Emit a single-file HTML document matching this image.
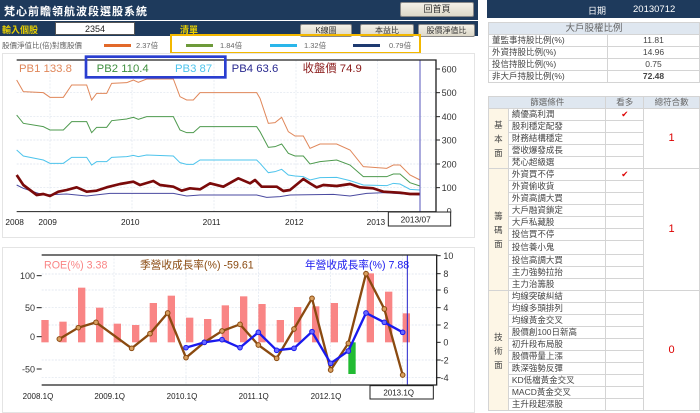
<!DOCTYPE html>
<html><head><meta charset="utf-8"><style>
*{margin:0;padding:0;box-sizing:border-box}
body{width:700px;height:413px;background:#fff;position:relative;overflow:hidden;font-family:"Liberation Sans","Noto Sans CJK TC",sans-serif;font-size:9px;color:#333}
.a{position:absolute}
.btn{position:absolute;background:linear-gradient(#f4f1e8,#ddd8c8);border:1px solid #888;border-radius:2px;text-align:center;font-size:8px;color:#333;line-height:12px}
table{border-collapse:collapse;position:absolute;font-size:8.5px;color:#444}
td{border:1px solid #d4d4d4;height:12px;line-height:11px;padding:0 3px;white-space:nowrap}
</style></head><body>
<!-- header -->
<div class="a" style="left:0;top:0;width:478px;height:20px;background:#1e3a5c"></div>
<div class="a" style="left:4px;top:3px;color:#fff;font-size:11px;font-weight:bold;letter-spacing:1px">梵心前瞻領航波段選股系統</div>
<div class="btn" style="left:400px;top:2px;width:74px;height:15px;line-height:13px;font-size:9px">回首頁</div>
<div class="a" style="left:0;top:21px;width:478px;height:15px;background:#1e3a5c"></div>
<div class="a" style="left:2px;top:23px;color:#e8d000;font-size:9px;font-weight:bold">輸入個股</div>
<div class="a" style="left:55px;top:22px;width:80px;height:13px;background:#fff;border:1px solid #555;text-align:center;font-size:9px;color:#222;line-height:12px">2354</div>
<div class="a" style="left:180px;top:23px;color:#e8d000;font-size:9px;font-weight:bold">清單</div>
<div class="btn" style="left:300px;top:24px;width:52px;height:13px">K線圖</div>
<div class="btn" style="left:360px;top:24px;width:54px;height:13px">本益比</div>
<div class="btn" style="left:418px;top:24px;width:57px;height:13px">股價淨值比</div>
<div class="a" style="left:0;top:37px;width:478px;height:15px;background:#fff"></div>
<div class="a" style="left:2px;top:40px;font-size:7.5px;color:#666">股價淨值比(倍)對應股價</div>
<div class="a" style="left:104px;top:44px;width:27px;height:3px;background:#e2692a"></div>
<div class="a" style="left:136px;top:40px;font-size:7.5px;color:#666">2.37倍</div>
<div class="a" style="left:186px;top:44px;width:27px;height:3px;background:#6d9a3a"></div>
<div class="a" style="left:220px;top:40px;font-size:7.5px;color:#666">1.84倍</div>
<div class="a" style="left:270px;top:44px;width:27px;height:3px;background:#2ab6ea"></div>
<div class="a" style="left:304px;top:40px;font-size:7.5px;color:#666">1.32倍</div>
<div class="a" style="left:353px;top:44px;width:27px;height:3px;background:#1e3a70"></div>
<div class="a" style="left:389px;top:40px;font-size:7.5px;color:#666">0.79倍</div>
<div class="a" style="left:170px;top:34px;width:251px;height:20px;border:2px solid #f3b800"></div>
<!-- panels -->
<div class="a" style="left:2px;top:53px;width:473px;height:185px;border:1px solid #e4e4e4"></div>
<div class="a" style="left:2px;top:247px;width:473px;height:166px;border:1px solid #e4e4e4"></div>
<!-- top chart -->
<svg class="a" style="left:0;top:50px" width="480" height="190" viewBox="0 0 1440 570" font-family="Liberation Sans,Noto Sans CJK TC,sans-serif">
<g stroke="#dde4ee" stroke-width="2" stroke-dasharray="6,4">
<line x1="50" y1="128" x2="1305" y2="128"/><line x1="50" y1="200" x2="1305" y2="200"/><line x1="50" y1="270" x2="1305" y2="270"/><line x1="50" y1="342" x2="1305" y2="342"/><line x1="50" y1="413" x2="1305" y2="413"/>
<line x1="150" y1="30" x2="150" y2="485"/><line x1="396" y1="30" x2="396" y2="485"/><line x1="642" y1="30" x2="642" y2="485"/><line x1="888" y1="30" x2="888" y2="485"/><line x1="1132" y1="30" x2="1132" y2="485"/>
</g>
<polyline fill="none" stroke="#e0875a" stroke-width="3" points="50,90 70,125 130,128 150,142 190,142 215,105 260,105 275,150 290,130 320,130 335,100 380,98 400,90 415,97 440,87 520,87 540,140 560,150 580,150 600,128 770,128 780,145 805,220 825,218 845,202 865,245 885,258 910,258 930,295 960,282 1010,282 1050,300 1090,350 1160,355 1180,345 1200,345 1230,375 1260,390"/>
<polyline fill="none" stroke="#4e9a4e" stroke-width="3" points="50,195 70,220 130,230 150,240 190,240 215,215 260,215 275,248 290,232 320,232 335,212 380,207 400,202 415,208 440,200 520,200 540,240 560,248 580,248 600,230 770,230 780,245 805,292 825,290 845,282 865,310 885,318 910,318 930,342 960,335 1010,330 1050,345 1090,380 1160,380 1180,372 1200,372 1230,398 1260,408"/>
<polyline fill="none" stroke="#4ec4ec" stroke-width="3" points="50,300 70,318 130,330 150,340 190,340 215,322 260,322 275,345 290,335 320,335 335,322 380,320 400,316 415,320 440,315 520,318 540,338 560,343 580,343 600,330 770,330 780,340 805,368 825,365 845,358 865,375 885,378 910,380 930,390 960,383 1010,382 1050,392 1090,405 1160,407 1180,400 1200,402 1230,418 1260,420"/>
<polyline fill="none" stroke="#4a4aa0" stroke-width="3" points="50,405 70,415 130,435 200,432 260,438 330,430 520,430 560,438 600,435 770,435 800,442 840,440 870,435 1000,433 1050,438 1100,430 1150,428 1260,435"/>
<polyline fill="none" stroke="#7a0a0a" stroke-width="8" stroke-linejoin="round" points="50,375 70,405 110,435 130,432 150,438 175,425 200,420 230,412 260,425 290,422 320,412 360,402 400,395 420,405 460,393 480,405 520,410 545,422 570,415 600,418 630,400 670,410 715,385 750,400 765,390 785,410 830,410 850,423 870,420 910,387 930,400 950,412 970,405 1010,408 1050,402 1080,412 1120,415 1150,425 1200,428 1230,432 1260,432"/>
<line x1="1260" y1="30" x2="1260" y2="485" stroke="#5555bb" stroke-width="3"/>
<polyline fill="none" stroke="#222" stroke-width="4" points="50,30 1308,30 1308,485"/>
<line x1="50" y1="485" x2="1308" y2="485" stroke="#222" stroke-width="3"/>
<g stroke="#222" stroke-width="3"><line x1="1308" y1="57" x2="1320" y2="57"/><line x1="1308" y1="128" x2="1320" y2="128"/><line x1="1308" y1="200" x2="1320" y2="200"/><line x1="1308" y1="270" x2="1320" y2="270"/><line x1="1308" y1="342" x2="1320" y2="342"/><line x1="1308" y1="413" x2="1320" y2="413"/></g>
<g font-size="27" fill="#333"><text x="1325" y="67">600</text><text x="1325" y="138">500</text><text x="1325" y="210">400</text><text x="1325" y="280">300</text><text x="1325" y="352">200</text><text x="1325" y="423">100</text><text x="1340" y="494">0</text></g>
<g font-size="25" fill="#222"><text x="16" y="525">2008</text><text x="115" y="525">2009</text><text x="363" y="525">2010</text><text x="608" y="525">2011</text><text x="855" y="525">2012</text><text x="1100" y="525">2013</text></g>
<rect x="1165" y="486" width="187" height="42" fill="#fff" stroke="#222" stroke-width="3"/>
<text x="1202" y="517" font-size="25" fill="#222">2013/07</text>
<g font-size="34"><text x="57" y="66" fill="#e0875a">PB1 133.8</text><text x="290" y="66" fill="#3f8f3f">PB2 110.4</text><text x="525" y="66" fill="#4ec4ec">PB3 87</text><text x="695" y="66" fill="#2a2a90">PB4 63.6</text><text x="908" y="66" fill="#8a1a1a">收盤價 74.9</text></g>
<rect x="258" y="20" width="418" height="62" fill="none" stroke="#2a3ed0" stroke-width="8"/>
</svg>
<!-- bottom chart -->
<svg class="a" style="left:0;top:235px" width="480" height="178" viewBox="0 0 1440 534" font-family="Liberation Sans,Noto Sans CJK TC,sans-serif">
<g stroke="#dde4ee" stroke-width="2" stroke-dasharray="6,4">
<line x1="125" y1="117" x2="1310" y2="117"/><line x1="125" y1="165" x2="1310" y2="165"/><line x1="125" y1="218" x2="1310" y2="218"/><line x1="125" y1="270" x2="1310" y2="270"/><line x1="125" y1="375" x2="1310" y2="375"/><line x1="125" y1="428" x2="1310" y2="428"/>
<line x1="342" y1="60" x2="342" y2="450"/><line x1="558" y1="60" x2="558" y2="450"/><line x1="775" y1="60" x2="775" y2="450"/><line x1="992" y1="60" x2="992" y2="450"/><line x1="1208" y1="60" x2="1208" y2="450"/>
</g>
<g fill="#f98585">
<rect x="124" y="255" width="22" height="67"/><rect x="178" y="260" width="22" height="62"/><rect x="234" y="158" width="22" height="164"/><rect x="288" y="218" width="22" height="104"/><rect x="341" y="266" width="22" height="56"/><rect x="396" y="270" width="22" height="52"/><rect x="449" y="204" width="22" height="118"/><rect x="503" y="182" width="22" height="140"/><rect x="558" y="248" width="22" height="74"/><rect x="612" y="252" width="22" height="70"/><rect x="665" y="211" width="22" height="111"/><rect x="720" y="184" width="22" height="138"/><rect x="775" y="207" width="22" height="115"/><rect x="830" y="255" width="22" height="67"/><rect x="882" y="216" width="22" height="106"/><rect x="936" y="214" width="22" height="108"/><rect x="992" y="204" width="22" height="118"/><rect x="1100" y="115" width="22" height="207"/><rect x="1155" y="170" width="22" height="152"/><rect x="1208" y="235" width="22" height="87"/>
</g>
<rect x="1045" y="322" width="22" height="95" fill="#22bb33"/>
<polyline fill="none" stroke="#8a4a10" stroke-width="7" points="178,312 235,278 288,262 395,340 450,296 503,234 558,368 613,322 666,288 720,268 775,330 830,370 882,282 936,190 992,405 1045,325 1098,116 1153,222 1208,420"/>
<g fill="#d8a060" stroke="#8a4a10" stroke-width="3"><circle cx="178" cy="312" r="7"/><circle cx="235" cy="278" r="7"/><circle cx="288" cy="262" r="7"/><circle cx="395" cy="340" r="7"/><circle cx="450" cy="296" r="7"/><circle cx="503" cy="234" r="7"/><circle cx="558" cy="368" r="7"/><circle cx="613" cy="322" r="7"/><circle cx="666" cy="288" r="7"/><circle cx="720" cy="268" r="7"/><circle cx="775" cy="330" r="7"/><circle cx="830" cy="370" r="7"/><circle cx="882" cy="282" r="7"/><circle cx="936" cy="190" r="7"/><circle cx="992" cy="405" r="7"/><circle cx="1045" cy="325" r="7"/><circle cx="1098" cy="116" r="7"/><circle cx="1153" cy="222" r="7"/><circle cx="1208" cy="420" r="7"/></g>
<polyline fill="none" stroke="#1a1aee" stroke-width="7" points="558,338 613,322 666,314 720,338 775,292 830,346 882,340 936,290 992,385 1045,348 1098,234 1153,262 1208,292"/>
<g fill="#6a6aff" stroke="#1a1aee" stroke-width="3"><circle cx="558" cy="338" r="7"/><circle cx="613" cy="322" r="7"/><circle cx="666" cy="314" r="7"/><circle cx="720" cy="338" r="7"/><circle cx="775" cy="292" r="7"/><circle cx="830" cy="346" r="7"/><circle cx="882" cy="340" r="7"/><circle cx="936" cy="290" r="7"/><circle cx="992" cy="385" r="7"/><circle cx="1045" cy="348" r="7"/><circle cx="1098" cy="234" r="7"/><circle cx="1153" cy="262" r="7"/><circle cx="1208" cy="292" r="7"/></g>
<line x1="1222" y1="60" x2="1222" y2="450" stroke="#2222cc" stroke-width="3"/>
<polyline fill="none" stroke="#222" stroke-width="4" points="125,60 1310,60 1310,450 125,450"/>
<g stroke="#222" stroke-width="3"><line x1="110" y1="122" x2="125" y2="122"/><line x1="110" y1="218" x2="125" y2="218"/><line x1="110" y1="305" x2="125" y2="305"/><line x1="110" y1="402" x2="125" y2="402"/>
<line x1="1310" y1="62" x2="1322" y2="62"/><line x1="1310" y1="116" x2="1322" y2="116"/><line x1="1310" y1="165" x2="1322" y2="165"/><line x1="1310" y1="218" x2="1322" y2="218"/><line x1="1310" y1="270" x2="1322" y2="270"/><line x1="1310" y1="322" x2="1322" y2="322"/><line x1="1310" y1="375" x2="1322" y2="375"/><line x1="1310" y1="428" x2="1322" y2="428"/></g>
<g font-size="27" fill="#333" text-anchor="end"><text x="105" y="132">100</text><text x="105" y="228">50</text><text x="105" y="315">0</text><text x="105" y="412">-50</text></g>
<g font-size="27" fill="#333"><text x="1330" y="72">10</text><text x="1330" y="126">8</text><text x="1330" y="175">6</text><text x="1330" y="228">4</text><text x="1330" y="280">2</text><text x="1330" y="332">0</text><text x="1322" y="385">-2</text><text x="1322" y="438">-4</text></g>
<g font-size="24" fill="#222"><text x="68" y="492">2008.1Q</text><text x="283" y="492">2009.1Q</text><text x="500" y="492">2010.1Q</text><text x="716" y="492">2011.1Q</text><text x="932" y="492">2012.1Q</text></g>
<rect x="1110" y="452" width="190" height="40" fill="#fff" stroke="#222" stroke-width="3"/>
<text x="1150" y="482" font-size="24" fill="#222">2013.1Q</text>
<g font-size="32"><text x="132" y="100" fill="#f98585">ROE(%) 3.38</text><text x="420" y="100" fill="#8a4a10">季營收成長率(%) -59.61</text><text x="915" y="100" fill="#1a1aee">年營收成長率(%) 7.88</text></g>
</svg>
<!-- right panel -->
<div class="a" style="left:487px;top:0;width:213px;height:18px;background:#1e3a5c"></div>
<div class="a" style="left:588px;top:4px;color:#fff;font-size:9px">日期</div>
<div class="a" style="left:633px;top:4px;color:#fff;font-size:9.5px">20130712</div>
<table style="left:488px;top:22px;width:212px">
<tr><td colspan="2" style="text-align:center;background:#dfe7f0;color:#666;font-size:9.5px">大戶股權比例</td></tr>
<tr><td style="width:119px">董監事持股比例(%)</td><td style="text-align:center">11.81</td></tr>
<tr><td>外資持股比例(%)</td><td style="text-align:center">14.96</td></tr>
<tr><td>投信持股比例(%)</td><td style="text-align:center">0.75</td></tr>
<tr><td>非大戶持股比例(%)</td><td style="text-align:center;font-weight:bold">72.48</td></tr>
</table>
<table style="left:488px;top:96px;width:212px">
<tr style="background:#dfe7f0;color:#666"><td colspan="2" style="text-align:center">篩選條件</td><td style="text-align:center;width:38px">看多</td><td style="text-align:center;width:56px">總符合數</td></tr>
<tr><td rowspan="5" style="width:20px;background:#fdf6e6;text-align:center;line-height:14px;padding:0">基<br>本<br>面</td><td style="width:98px">績優高利潤</td><td style="text-align:center;color:#d00">✔</td><td rowspan="5" style="text-align:center;color:#d00;font-size:11px">1</td></tr>
<tr><td>股利穩定配發</td><td></td></tr><tr><td>財務結構穩定</td><td></td></tr><tr><td>營收爆發成長</td><td></td></tr><tr><td>梵心超級選</td><td></td></tr>
<tr><td rowspan="10" style="background:#fdf6e6;text-align:center;line-height:14px;padding:0">籌<br>碼<br>面</td><td>外資買不停</td><td style="text-align:center;color:#d00">✔</td><td rowspan="10" style="text-align:center;color:#d00;font-size:11px">1</td></tr>
<tr><td>外資偷收貨</td><td></td></tr><tr><td>外資高調大買</td><td></td></tr><tr><td>大戶融資鎖定</td><td></td></tr><tr><td>大戶私藏股</td><td></td></tr><tr><td>投信買不停</td><td></td></tr><tr><td style="height:14px">投信養小鬼</td><td></td></tr><tr><td>投信高調大買</td><td></td></tr><tr><td>主力強勢拉抬</td><td></td></tr><tr><td>主力治籌股</td><td></td></tr>
<tr><td rowspan="10" style="background:#fdf6e6;text-align:center;line-height:14px;padding:0">技<br>術<br>面</td><td>均線突破糾結</td><td></td><td rowspan="10" style="text-align:center;color:#d00;font-size:11px">0</td></tr>
<tr><td>均線多頭排列</td><td></td></tr><tr><td>均線黃金交叉</td><td></td></tr><tr><td>股價創100日新高</td><td></td></tr><tr><td>初升段布局股</td><td></td></tr><tr><td>股價帶量上漲</td><td></td></tr><tr><td>跌深強勢反彈</td><td></td></tr><tr><td>KD低檔黃金交叉</td><td></td></tr><tr><td>MACD黃金交叉</td><td></td></tr><tr><td>主升段起漲股</td><td></td></tr>
</table>
</body></html>
